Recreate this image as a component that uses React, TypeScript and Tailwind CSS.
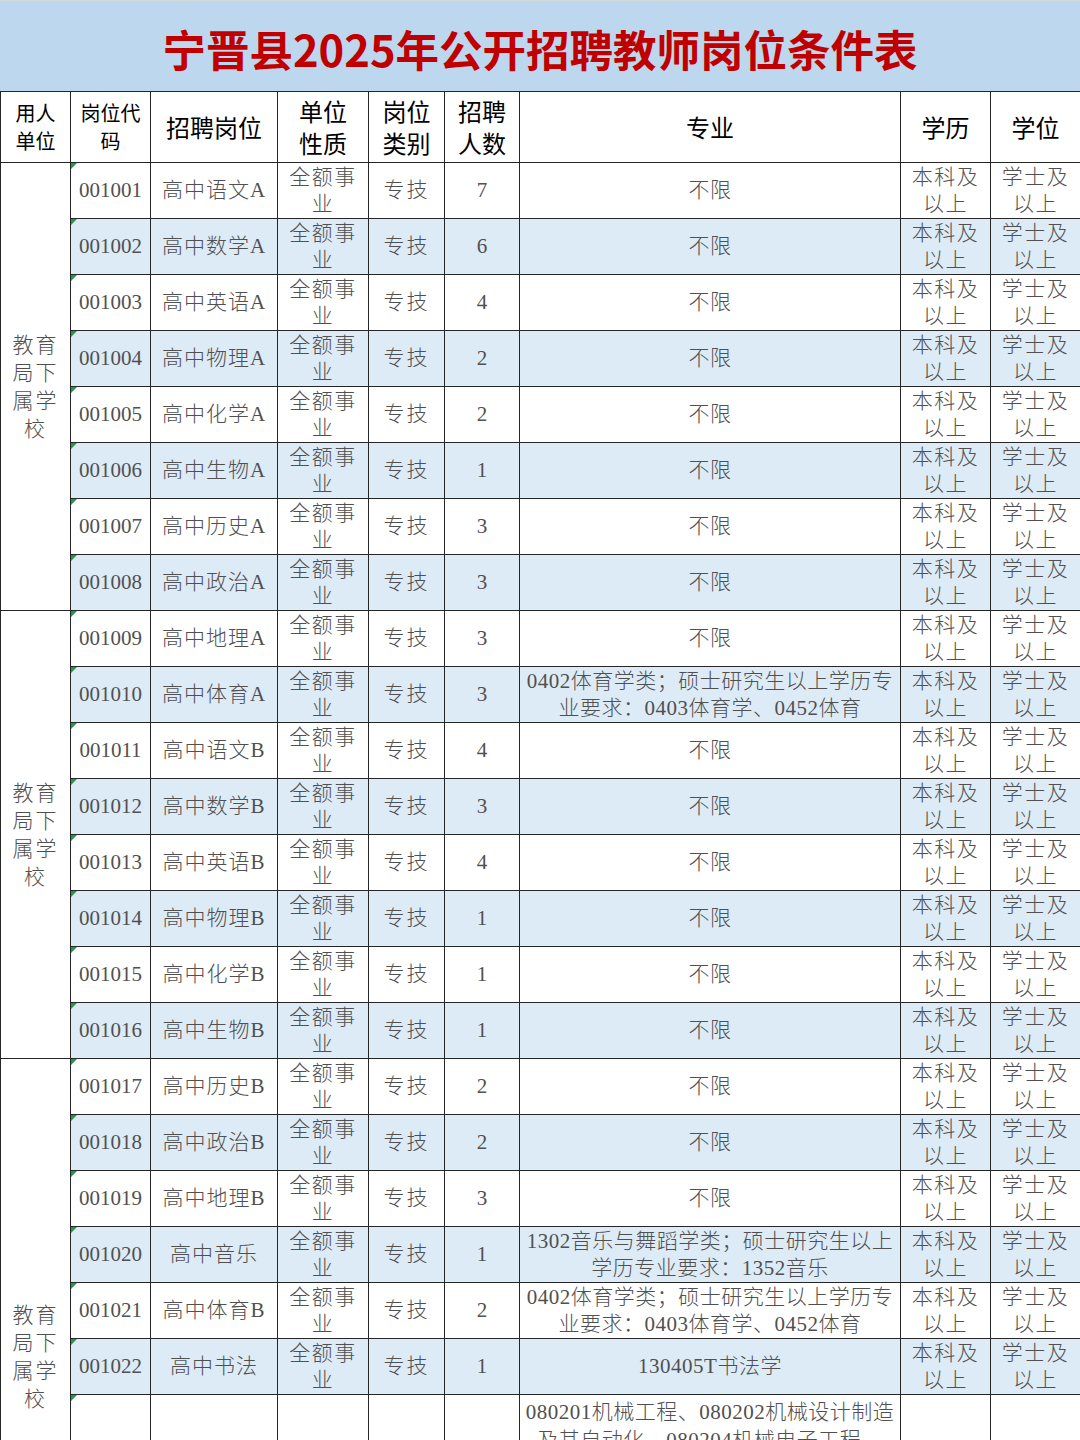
import React from "react";

type Row = { code: string; name: string; n: string; major: string[] };

const rows: Row[] = [
  { code: "001001", name: "高中语文A", n: "7", major: ["不限"] },
  { code: "001002", name: "高中数学A", n: "6", major: ["不限"] },
  { code: "001003", name: "高中英语A", n: "4", major: ["不限"] },
  { code: "001004", name: "高中物理A", n: "2", major: ["不限"] },
  { code: "001005", name: "高中化学A", n: "2", major: ["不限"] },
  { code: "001006", name: "高中生物A", n: "1", major: ["不限"] },
  { code: "001007", name: "高中历史A", n: "3", major: ["不限"] },
  { code: "001008", name: "高中政治A", n: "3", major: ["不限"] },
  { code: "001009", name: "高中地理A", n: "3", major: ["不限"] },
  {
    code: "001010",
    name: "高中体育A",
    n: "3",
    major: ["0402体育学类；硕士研究生以上学历专", "业要求：0403体育学、0452体育"],
  },
  { code: "001011", name: "高中语文B", n: "4", major: ["不限"] },
  { code: "001012", name: "高中数学B", n: "3", major: ["不限"] },
  { code: "001013", name: "高中英语B", n: "4", major: ["不限"] },
  { code: "001014", name: "高中物理B", n: "1", major: ["不限"] },
  { code: "001015", name: "高中化学B", n: "1", major: ["不限"] },
  { code: "001016", name: "高中生物B", n: "1", major: ["不限"] },
  { code: "001017", name: "高中历史B", n: "2", major: ["不限"] },
  { code: "001018", name: "高中政治B", n: "2", major: ["不限"] },
  { code: "001019", name: "高中地理B", n: "3", major: ["不限"] },
  {
    code: "001020",
    name: "高中音乐",
    n: "1",
    major: ["1302音乐与舞蹈学类；硕士研究生以上", "学历专业要求：1352音乐"],
  },
  {
    code: "001021",
    name: "高中体育B",
    n: "2",
    major: ["0402体育学类；硕士研究生以上学历专", "业要求：0403体育学、0452体育"],
  },
  { code: "001022", name: "高中书法", n: "1", major: ["130405T书法学"] },
];

const td =
  "border border-[#262626] p-0 text-center align-middle leading-[27px] text-[21px] font-light text-[#505050] font-['Liberation_Serif','Noto_Sans_CJK_SC',serif]";
const th =
  "border border-[#262626] p-0 text-center align-middle font-normal text-black font-['Noto_Sans_CJK_SC',sans-serif]";

function Unit({ span }: { span: number }) {
  return (
    <td rowSpan={span} className={td + " bg-white tracking-[2px] leading-[28px]"}>
      教育
      <br />
      局下
      <br />
      属学
      <br />
      校
    </td>
  );
}

function Flag() {
  return (
    <span className="absolute left-0 top-0 w-0 h-0 border-t-[6px] border-r-[6px] border-t-[#1f9a3c] border-r-transparent" />
  );
}

export default function App() {
  return (
    <div className="w-[1080px] h-[1440px] overflow-hidden bg-white">
      <div className="h-[91px] bg-[#bdd7ee] border-t border-[#d0d8e0] flex items-center justify-center pt-[6px]">
        <h1 className="text-[43.5px] leading-none font-bold text-[#c00000] font-['Noto_Sans_CJK_SC',sans-serif]">
          宁晋县2025年公开招聘教师岗位条件表
        </h1>
      </div>
      <table className="w-[1080px] table-fixed border-collapse">
        <colgroup>
          <col className="w-[70px]" />
          <col className="w-[80px]" />
          <col className="w-[127px]" />
          <col className="w-[91px]" />
          <col className="w-[76px]" />
          <col className="w-[75px]" />
          <col className="w-[381px]" />
          <col className="w-[90px]" />
          <col className="w-[90px]" />
        </colgroup>
        <thead>
          <tr className="h-[71px]">
            <th className={th + " text-[20px] leading-[28px]"}>
              用人
              <br />
              单位
            </th>
            <th className={th + " text-[20px] leading-[28px]"}>
              岗位代
              <br />
              码
            </th>
            <th className={th + " text-[24px]"}>招聘岗位</th>
            <th className={th + " text-[24px] leading-[32px]"}>
              单位
              <br />
              性质
            </th>
            <th className={th + " text-[24px] leading-[32px]"}>
              岗位
              <br />
              类别
            </th>
            <th className={th + " text-[24px] leading-[32px]"}>
              招聘
              <br />
              人数
            </th>
            <th className={th + " text-[24px]"}>专业</th>
            <th className={th + " text-[24px]"}>学历</th>
            <th className={th + " text-[24px]"}>学位</th>
          </tr>
        </thead>
        <tbody>
          {rows.map((r, i) => {
            const blue = i % 2 === 1;
            const bg = blue ? " bg-[#ddebf7]" : " bg-white";
            return (
              <tr key={r.code} className="h-[56px]">
                {i === 0 && <Unit span={8} />}
                {i === 8 && <Unit span={8} />}
                {i === 16 && <Unit span={7} />}
                <td className={td + bg + " relative"}>
                  <Flag />
                  {r.code}
                </td>
                <td className={td + bg + " tracking-[1px]"}>{r.name}</td>
                <td className={td + bg + " tracking-[1.5px]"}>
                  全额事
                  <br />
                  业
                </td>
                <td className={td + bg + " tracking-[2px]"}>专技</td>
                <td className={td + bg}>{r.n}</td>
                <td className={td + bg + " tracking-[0.5px]"}>
                  {r.major.map((m, k) => (
                    <div key={k}>{m}</div>
                  ))}
                </td>
                <td className={td + bg + " tracking-[1.5px]"}>
                  本科及
                  <br />
                  以上
                </td>
                <td className={td + bg + " tracking-[1.5px]"}>
                  学士及
                  <br />
                  以上
                </td>
              </tr>
            );
          })}
          <tr className="h-[260px]">
            <td className={td + " bg-white relative"}>
              <Flag />
            </td>
            <td className={td + " bg-white"}></td>
            <td className={td + " bg-white"}></td>
            <td className={td + " bg-white"}></td>
            <td className={td + " bg-white"}></td>
            <td className={td + " bg-white align-top pt-[3px] leading-[28px] tracking-[0.5px]"}>
              <div>080201机械工程、080202机械设计制造</div>
              <div>及其自动化、080204机械电子工程、</div>
              <div>080205工业设计、080207车辆工程、</div>
              <div>080208汽车服务工程</div>
            </td>
            <td className={td + " bg-white"}></td>
            <td className={td + " bg-white"}></td>
          </tr>
        </tbody>
      </table>
    </div>
  );
}
